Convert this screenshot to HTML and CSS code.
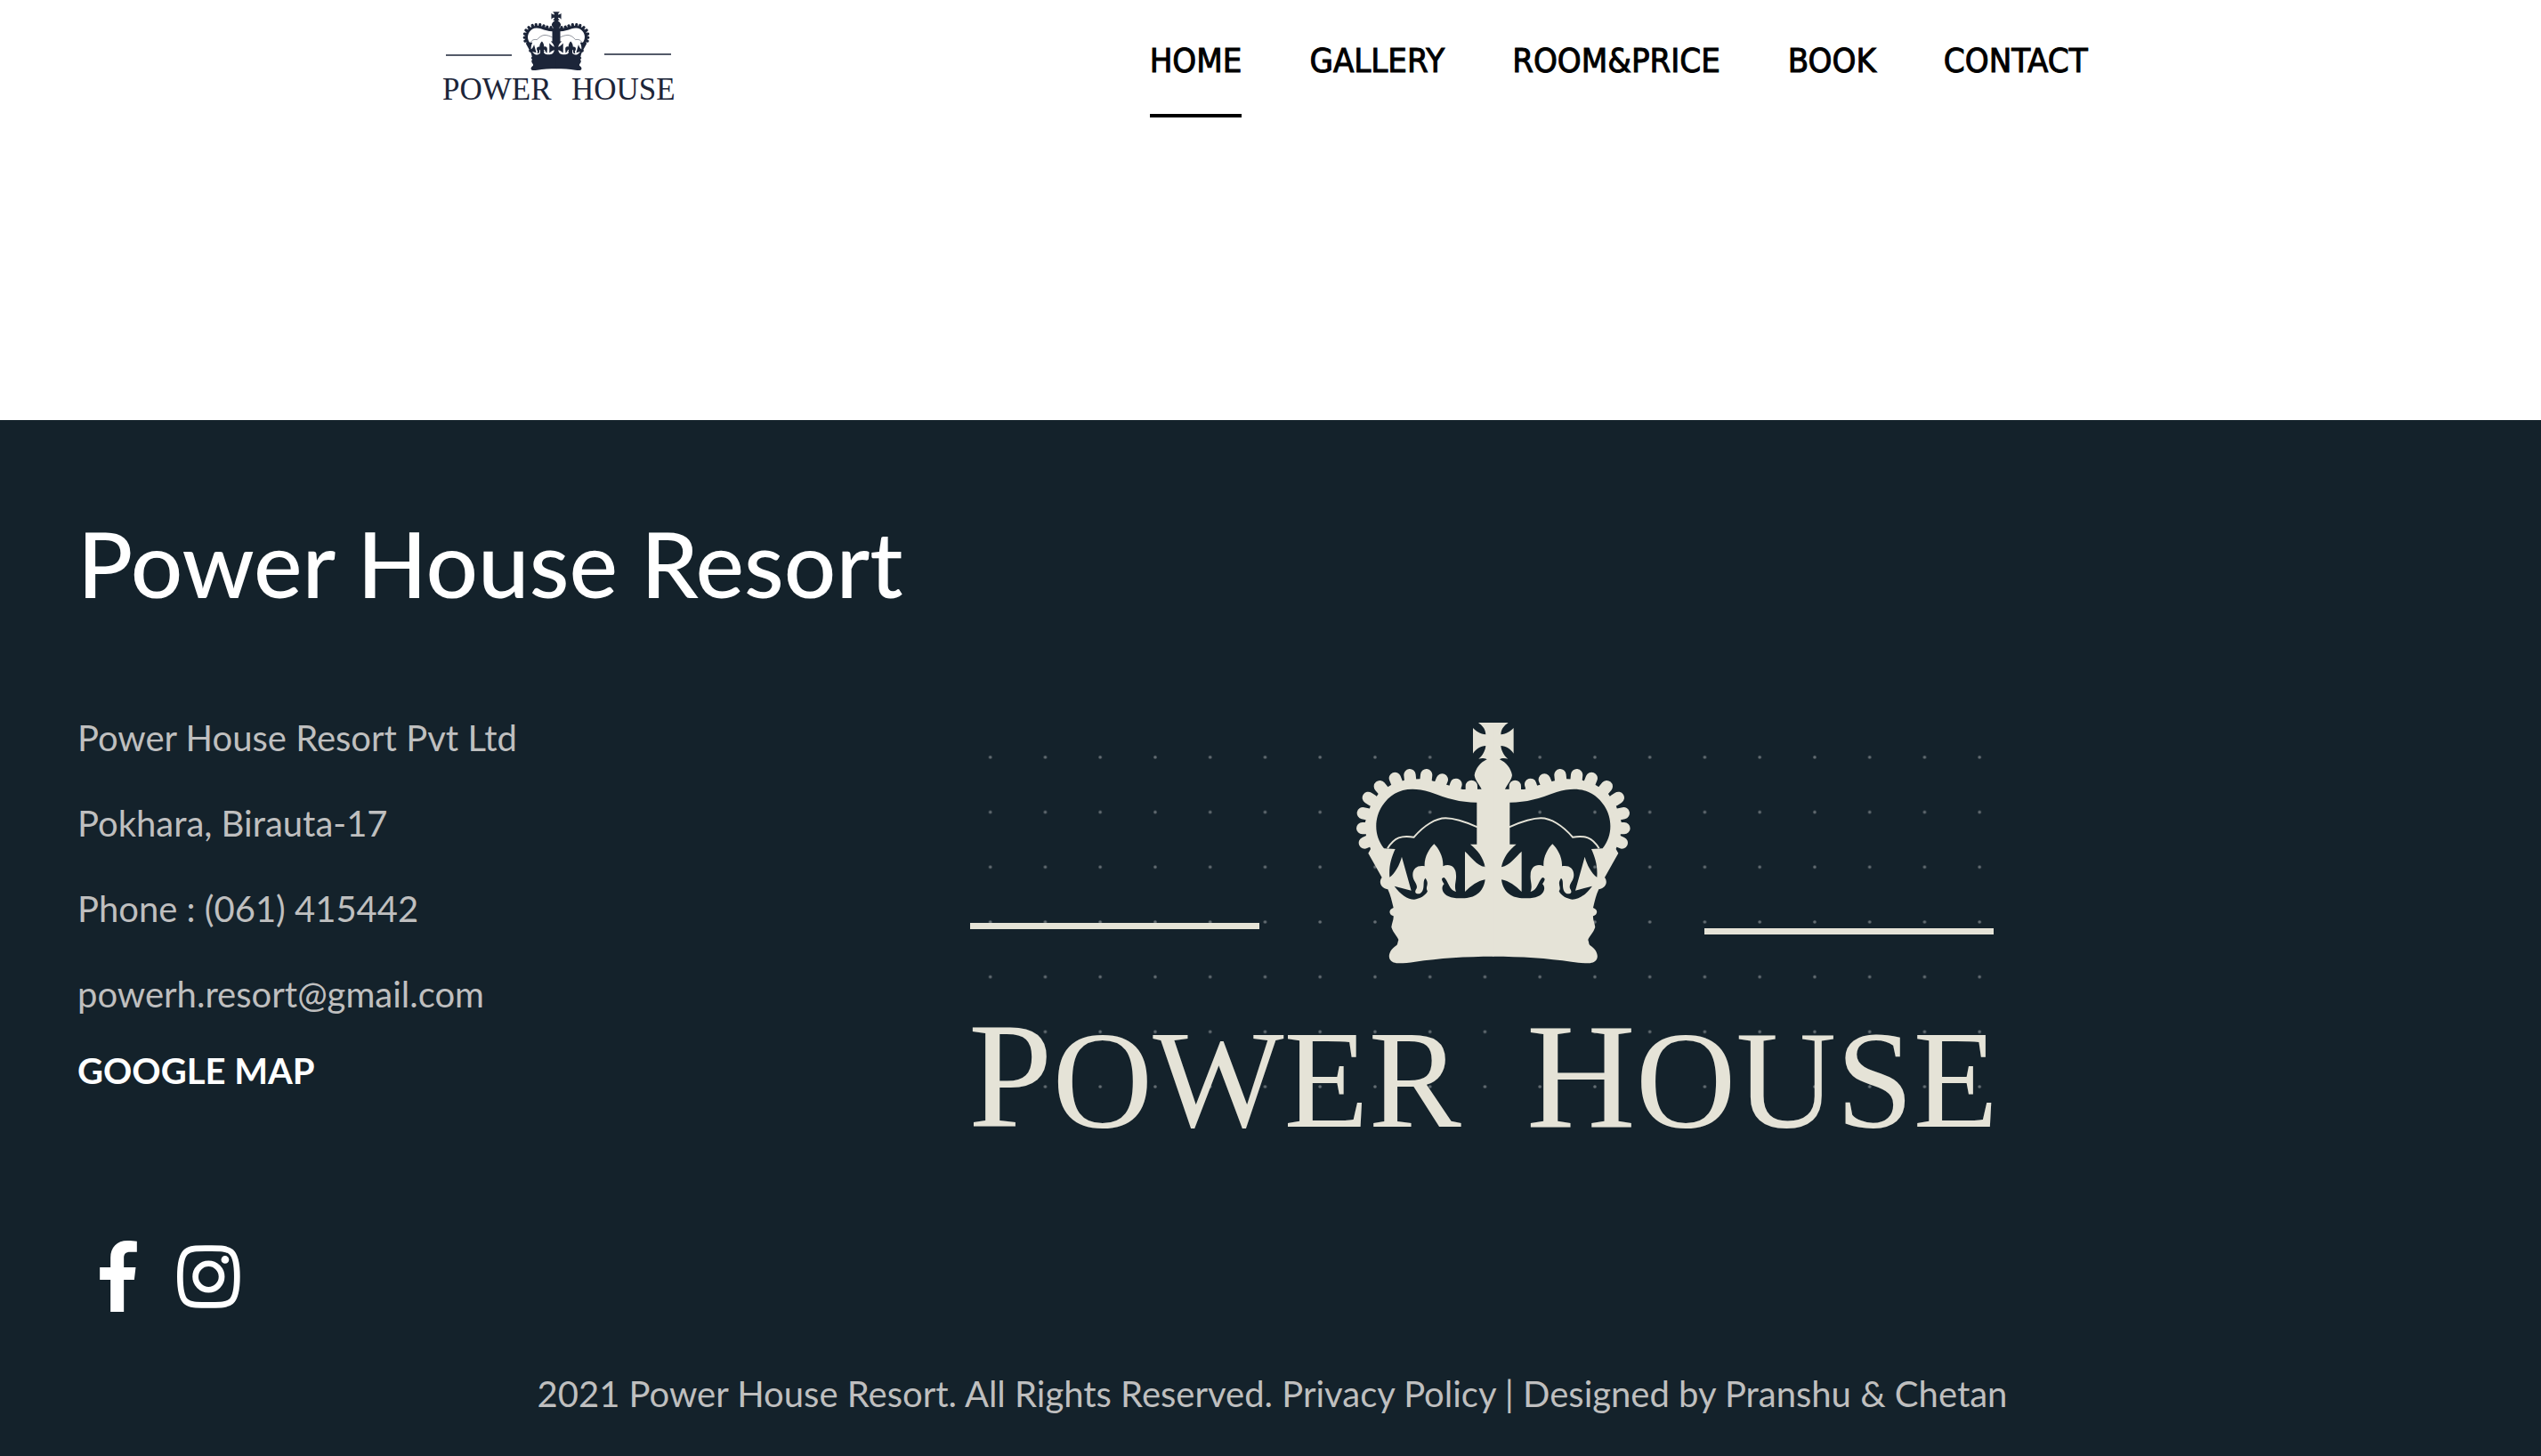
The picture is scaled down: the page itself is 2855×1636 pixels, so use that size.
FILE: index.html
```html
<!DOCTYPE html>
<html lang="en">
<head>
<meta charset="utf-8">
<title>Power House Resort</title>
<link rel="stylesheet" href="styles.css">
</head>
<body>
<svg class="sprite" aria-hidden="true">
  <defs>
    <g id="crown-half">
      <path fill-rule="evenodd" d="M535 66H483C495 75 507 85 508 106C490 104 475 95 465 84V170C475 155 490 144 508 144C507 160 497 178 484 188C495 185 508 186 512 190C490 200 474 220 470 243C472 260 485 272 494 290L430 291L350 268L300 255L240 258L190 275L150 300L120 345L102 400L105 450L120 492L112 506L134 545L158 588C148 600 150 622 178 628C188 650 192 670 197 690C180 696 180 712 197 718C198 730 192 740 190 755C196 775 210 785 214 798C210 808 212 812 208 816C185 830 178 852 185 864C195 882 225 878 270 872C350 860 440 854 535 854ZM478 335C420 335 380 322 320 300C240 275 190 300 160 345C130 390 132 450 165 490L203 492C190 520 181 550 184 587C202 575 218 545 225 518L257 632L200 617C220 645 245 662 267 662C285 660 305 650 312 634C302 620 320 612 305 590C292 600 308 630 285 643C268 644 268 635 275 625C280 610 262 600 262 580C262 555 280 546 302 550C300 520 318 490 334 475C350 490 366 520 364 550C385 540 408 550 408 580C410 600 400 615 408 636C385 632 382 600 368 588C354 590 362 600 368 610C362 615 358 625 366 638C378 655 400 658 430 658C470 658 500 640 506 595C480 600 460 615 438 636V500C460 520 475 545 506 553C500 520 480 495 456 476H478Z"/>
      <path d="M177 490C200 452 225 445 266 452C300 412 340 388 373 388C410 388 450 405 480 418" fill="none" stroke="currentColor" stroke-width="6"/>
      <g stroke="currentColor" stroke-width="40" stroke-linecap="round"><path d="M460 280V292M408 274L404 286M361 258L355 272M308 242L306 262M252 242L254 262M202 253L208 268M151 281L162 294M112 319L126 328M94 371L112 375M92 422H112M100 471L116 464"/></g>
    </g>
    <g id="crown" fill="currentColor">
      <use href="#crown-half"/>
      <use href="#crown-half" transform="translate(1067 0) scale(-1 1)"/>
    </g>
  </defs>
</svg>

<header class="site-header">
  <a class="brand" href="#" aria-label="Power House">
    <svg class="brand-logo" viewBox="485 0 290 130">
      <use href="#crown" transform="translate(581.8 8) scale(.081)"/>
      <path d="M501 62H575M679 61H754" stroke="currentColor" stroke-width="1.5"/>
      <text class="brand-text" x="497" y="112">POWER</text>
      <text class="brand-text" x="642" y="112">HOUSE</text>
    </svg>
  </a>
  <nav class="main-nav">
    <a class="nav-link active" href="#">HOME</a>
    <a class="nav-link" href="#gallery">GALLERY</a>
    <a class="nav-link" href="#rooms">ROOM&amp;PRICE</a>
    <a class="nav-link" href="#book">BOOK</a>
    <a class="nav-link" href="#contact">CONTACT</a>
  </nav>
</header>

<footer class="site-footer" id="contact">
  <h2 class="footer-title">Power House Resort</h2>
  <div class="footer-main">
    <div class="contact">
      <p class="contact-line">Power House Resort Pvt Ltd</p>
      <p class="contact-line">Pokhara, Birauta-17</p>
      <p class="contact-line">Phone : (061) 415442</p>
      <p class="contact-line">powerh.resort@gmail.com</p>
      <a class="map-link" href="#map">GOOGLE MAP</a>
      <div class="social">
        <a href="#facebook" aria-label="Facebook"><svg class="facebook" viewBox="97 72 125 240"><path fill="currentColor" d="M133 312V204H97V162H133V130C133 94 155 72 190 72C202 72 212 73 222 74V110H200C183 110 178 118 178 130V162H218L213 204H178V312Z"/></svg></a>
        <a href="#instagram" aria-label="Instagram"><svg class="instagram" viewBox="358 86 212 212"><g fill="none" stroke="currentColor" stroke-width="20"><path d="M463 97C533 97 559 93 559 192S533 287 463 287S368 291 368 192S394 97 463 97Z"/><circle cx="463.500" cy="192" r="44"/></g><circle cx="519" cy="135" r="13" fill="currentColor"/></svg></a>
      </div>
    </div>
    <svg class="footer-logo" viewBox="1080 800 1190 500" role="img" aria-label="Power House">
      <defs>
        <pattern id="dots" x="1081.800" y="820" width="61.750" height="61.700" patternUnits="userSpaceOnUse"><circle cx="30.900" cy="30.900" r="1.800" fill="#fff" opacity=".35"/></pattern>
      </defs>
      <rect x="1081.800" y="820" width="1173" height="432" fill="url(#dots)"/>
      <use href="#crown" transform="translate(1500 790) scale(.3333)"/>
      <path d="M1090 1040.500H1415M1915 1046.500H2240" stroke="currentColor" stroke-width="7"/>
      <text class="mark" x="1088" y="1266">P<tspan class="mark-small">OWER</tspan></text>
      <text class="mark" x="1715" y="1266">H<tspan class="mark-small">OUSE</tspan></text>
    </svg>
  </div>
  <p class="copyright">2021 Power House Resort. All Rights Reserved. Privacy Policy | Designed by Pranshu &amp; Chetan</p>
</footer>
</body>
</html>
```
FILE: styles.css
```css
* { box-sizing: border-box; }
body { margin: 0; background: #fff; font-family: Lato, sans-serif; font-size: 40px; }
a { color: inherit; text-decoration: none; }
svg { display: block; overflow: visible; }
p, h2 { margin: 0; }
.sprite { position: absolute; width: 0; height: 0; }

.site-header {
  display: flex;
  justify-content: space-between;
  align-items: flex-start;
  width: 66%;
  margin: 0 auto 340px;
}
.brand { color: #1c2539; }
.brand-logo { width: 290px; height: 130px; }
.brand-text { font: 35px "Liberation Serif", serif; fill: currentColor; }
.main-nav {
  display: flex;
  justify-content: space-between;
  flex: 0 1 1078px;
  padding-right: 24px;
  color: #000;
  font-family: "DejaVu Sans Condensed", "DejaVu Sans", sans-serif;
  font-size: 38px;
  -webkit-text-stroke: 1px #000;
}
.nav-link { height: 132px; line-height: 136px; border-bottom: 4px solid transparent; }
.nav-link.active { border-color: #000; }

.site-footer { padding: 100px 83px 42px 87px; background: #14222b; color: #bfbfbf; }
.footer-title {
  color: #fff;
  font-family: Lato, sans-serif;
  font-weight: 500;
  font-size: 103px;
  line-height: 120px;
}
.footer-main {
  display: grid;
  grid-template-columns: 37fr 63fr;
  align-items: start;
  margin-top: 89px;
}
.contact-line { line-height: 96px; }
.map-link { display: block; color: #fff; font-weight: 700; line-height: 76px; }
.social { display: flex; align-items: center; gap: 45px; padding: 153px 0 0 25px; color: #fff; }
.facebook { width: 42px; height: 80px; }
.instagram { width: 71px; height: 71px; }
.footer-logo { width: 1190px; max-width: 100%; margin-top: 19px; color: #e5e3d7; }
.mark { font: 170px "Liberation Serif", serif; fill: currentColor; }
.mark-small { font-size: 156px; }
.copyright { margin-top: 64px; line-height: 56px; text-align: center; }
```
